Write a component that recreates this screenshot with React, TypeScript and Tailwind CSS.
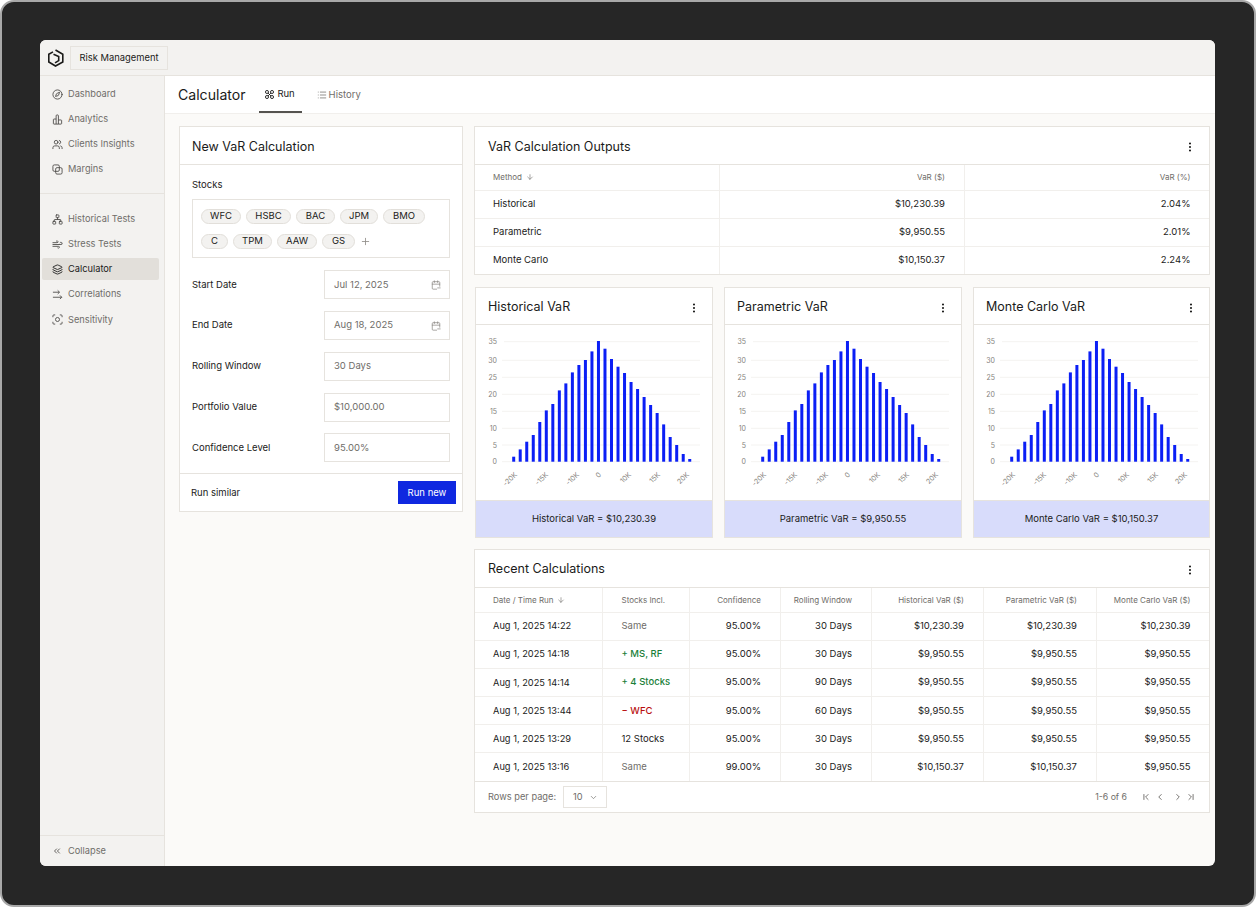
import React from 'react';
import {
  ArrowDown,
  CalendarMinus,
  ChevronDown,
  ChevronFirst,
  ChevronLast,
  ChevronLeft,
  ChevronRight,
  ChevronsLeft,
  Compass,
  EllipsisVertical,
  Layers,
  List,
  Network,
  Plus,
  Users,
  Wind,
} from 'lucide-react';

type IconProps = { size?: number; strokeWidth?: number; className?: string };

// custom icons use a 12 unit box, so the lucide stroke value is halved
const AnalyticsIcon = ({ size = 12, strokeWidth = 2, className }: IconProps) => (
  <svg width={size} height={size} viewBox="0 0 12 12" fill="none" stroke="currentColor" strokeWidth={strokeWidth / 2} className={className}>
    <path d="M4.5 11H2.2a.7.7 0 0 1-.7-.7V6.2a.7.7 0 0 1 .7-.7h2.3" />
    <path d="M4.5 11V2a1 1 0 0 1 1-1h.5a1 1 0 0 1 1 1v9z" />
    <path d="M7 11h2.8a.7.7 0 0 0 .7-.7V7.2a.7.7 0 0 0-.7-.7H7" />
  </svg>
);

const MarginsIcon = ({ size = 12, strokeWidth = 2, className }: IconProps) => (
  <svg width={size} height={size} viewBox="0 0 12 12" fill="none" stroke="currentColor" strokeWidth={strokeWidth / 2} className={className}>
    <rect x="1" y="1" width="7" height="7" rx="1.5" />
    <rect x="4" y="4" width="7" height="7" rx="1.5" />
  </svg>
);

const CorrelationsIcon = ({ size = 12, strokeWidth = 2, className }: IconProps) => (
  <svg width={size} height={size} viewBox="0 0 12 12" fill="none" stroke="currentColor" strokeWidth={strokeWidth / 2} className={className}>
    <path d="M1 3.500h7M6.200 1.500l2 2-2 2" />
    <path d="M1 9h9.500M8.700 7l2 2-2 2" />
  </svg>
);

const SensitivityIcon = ({ size = 12, strokeWidth = 2, className }: IconProps) => (
  <svg width={size} height={size} viewBox="0 0 12 12" fill="none" stroke="currentColor" strokeWidth={strokeWidth / 2} className={className}>
    <path d="M1 3.500V2a1 1 0 0 1 1-1h1.500M8.500 1H10a1 1 0 0 1 1 1v1.500M11 8.500V10a1 1 0 0 1-1 1H8.500M3.500 11H2a1 1 0 0 1-1-1V8.500" />
    <circle cx="6" cy="6" r="2.200" />
  </svg>
);

const NAV_TOP = [
  { label: 'Dashboard', icon: Compass },
  { label: 'Analytics', icon: AnalyticsIcon },
  { label: 'Clients Insights', icon: Users },
  { label: 'Margins', icon: MarginsIcon },
];

const NAV_BOTTOM = [
  { label: 'Historical Tests', icon: Network },
  { label: 'Stress Tests', icon: Wind },
  { label: 'Calculator', icon: Layers, active: true },
  { label: 'Correlations', icon: CorrelationsIcon },
  { label: 'Sensitivity', icon: SensitivityIcon },
];

const STOCKS = [
  { label: 'WFC', w: 'w-[40px]' },
  { label: 'HSBC', w: 'w-[45px]' },
  { label: 'BAC', w: 'w-[39px]' },
  { label: 'JPM', w: 'w-[38px]' },
  { label: 'BMO', w: 'w-[42px]' },
  { label: 'C', w: 'w-[27px]' },
  { label: 'TPM', w: 'w-[39px]' },
  { label: 'AAW', w: 'w-[40px]' },
  { label: 'GS', w: 'w-[33px]' },
];

const BARS = [5, 12.3, 20, 26.7, 39.7, 51.3, 57.7, 71.3, 78.3, 89.3, 96.7, 101.7, 110.3, 120.7, 113, 102.7, 95, 88.7, 79.7, 72.7, 64.7, 56.7, 48.7, 37.3, 24.7, 16.7, 7.7, 2.7];
const Y_TICKS = [
  { label: 35, y: 16.7 },
  { label: 30, y: 35.3 },
  { label: 25, y: 52.3 },
  { label: 20, y: 69.3 },
  { label: 15, y: 86.3 },
  { label: 10, y: 103.3 },
  { label: 5, y: 120 },
  { label: 0, y: 136.7 },
];
const X_TICKS = [
  { label: '-20K', x: 39 },
  { label: '-15K', x: 70 },
  { label: '-10K', x: 101 },
  { label: '0', x: 123 },
  { label: '10K', x: 153 },
  { label: '15K', x: 182 },
  { label: '20K', x: 211 },
];

const RECENT = [
  ['Aug 1, 2025 14:22', 'Same', 'text-[#6f6d69]', '95.00%', '30 Days', '$10,230.39', '$10,230.39', '$10,230.39'],
  ['Aug 1, 2025 14:18', '+ MS, RF', 'font-medium text-[#1c7f3a]', '95.00%', '30 Days', '$9,950.55', '$9,950.55', '$9,950.55'],
  ['Aug 1, 2025 14:14', '+ 4 Stocks', 'font-medium text-[#1c7f3a]', '95.00%', '90 Days', '$9,950.55', '$9,950.55', '$9,950.55'],
  ['Aug 1, 2025 13:44', '− WFC', 'font-medium text-[#b90f0f]', '95.00%', '60 Days', '$9,950.55', '$9,950.55', '$9,950.55'],
  ['Aug 1, 2025 13:29', '12 Stocks', 'text-[#1b1b1a]', '95.00%', '30 Days', '$9,950.55', '$9,950.55', '$9,950.55'],
  ['Aug 1, 2025 13:16', 'Same', 'text-[#6f6d69]', '99.00%', '30 Days', '$10,150.37', '$10,150.37', '$9,950.55'],
];

const Logo = () => (
  <svg width="17" height="18" viewBox="0 0 17 18" fill="none" stroke="#1b1b1a" strokeWidth="1.6">
    <path d="M8.500 1 15.800 5.300V13L8.500 17 1.800 13V5.300L6 2.900" />
    <path d="M6.500 5.300 11.700 7.600V11.600L8 13.900" />
  </svg>
);

const RunIcon = () => (
  <svg width="9" height="9" viewBox="0 0 10 10" fill="none" stroke="#1b1b1a" strokeWidth="1">
    <circle cx="2.200" cy="2.200" r="1.700" />
    <circle cx="7.800" cy="2.200" r="1.700" />
    <circle cx="2.200" cy="7.800" r="1.700" />
    <circle cx="7.800" cy="7.800" r="1.700" />
    <path d="M3.400 3.400 6.600 6.600M6.600 3.400 3.400 6.600" />
  </svg>
);

const NavItem = ({ label, icon: Icon, active }: { label: string; icon: React.ElementType; active?: boolean }) => (
  <div className={`ml-[2px] mr-[5px] flex h-[22px] items-center gap-[5px] rounded-[2px] pl-[10px] text-[9.25px] ${active ? 'bg-[#e2dfda] text-[#1b1b1a]' : 'text-[#6f6d69]'}`}>
    <Icon size={11} strokeWidth={1.9} className={active ? 'text-[#1b1b1a]' : 'text-[#4a4946]'} />
    <span>{label}</span>
  </div>
);

const CardHead = ({ title, menu = true, pad = 'px-[13px] pt-[3px]', height = 'h-[38px]' }: { title: string; menu?: boolean; pad?: string; height?: string }) => (
  <div className={`flex items-center justify-between border-b border-[#e6e3de] ${height} ${pad}`}>
    <h2 className="text-[12.5px] font-normal text-[#1b1b1a]">{title}</h2>
    {menu && <EllipsisVertical size={12} strokeWidth={2.2} className="text-[#1b1b1a]" />}
  </div>
);

const Field = ({ label, value, date }: { label: string; value: string; date?: boolean }) => (
  <div className="flex h-[29px] items-center justify-between">
    <span className="text-[9.5px] text-[#1b1b1a]">{label}</span>
    <div className="flex h-[29px] w-[126px] items-center justify-between border border-[#e6e3de] bg-white pl-[9px] pr-[8px] text-[9.5px] text-[#6f6d69]">
      <span>{value}</span>
      {date && <CalendarMinus size={10} strokeWidth={1.7} className="text-[#85827d]" />}
    </div>
  </div>
);

const Chip = ({ label, w }: { label: string; w: string }) => (
  <span className={`flex h-[15px] items-center justify-center rounded-full border border-[#e2dfda] bg-[#f3f2f0] text-[9.5px] text-[#1b1b1a] ${w}`}>{label}</span>
);

const VarChart = () => (
  <svg width="236" height="175" viewBox="0 0 236 175" className="block">
    {Y_TICKS.map((tick) => (
      <g key={tick.label}>
        <line x1={tick.label === 35 ? 28 : 26} x2={tick.label === 25 ? 237 : 224} y1={tick.y} y2={tick.y} stroke="#f4f3f1" strokeWidth="1" />
        <text x="21" y={tick.y + 2.5} textAnchor="end" fontSize="7" fill="#85827d">{tick.label}</text>
      </g>
    ))}
    {BARS.map((h, i) => (
      <rect key={i} x={36.2 + i * 6.52} y={136.7 - h} width="3" height={h} fill="#0b1ff5" />
    ))}
    {X_TICKS.map((tick) => (
      <text key={tick.label} x={tick.x - 1} y="155" textAnchor="end" fontSize="7" fill="#85827d" transform={`rotate(-45 ${tick.x - 1} 155)`} dx="6" dy="-1">
        {tick.label}
      </text>
    ))}
  </svg>
);

const ChartCard = ({ title, result, width }: { title: string; result: string; width: string }) => (
  <div className={`shrink-0 overflow-hidden border border-[#e6e3de] bg-white ${width}`}>
    <CardHead title={title} pad="px-[12px] pt-[3px]" height="h-[37px]" />
    <div className="h-[175px]"><VarChart /></div>
    <div className="flex h-[37px] items-center justify-center border-t border-[#e6e3de] bg-[#d8dcfb] text-[9.5px] text-[#1b1b1a]">{result}</div>
  </div>
);

export default function App() {
  return (
    <div className="h-[907px] w-[1256px] bg-white font-['Inter',sans-serif] antialiased">
      <div className="h-full w-full rounded-[14px] border-2 border-[#a8a8a8] bg-[#262626] p-[38px]">
        <div className="flex h-[826px] w-[1175px] flex-col overflow-hidden rounded-[6px] bg-[#fbfaf8]">
          <div className="flex h-[36px] shrink-0 items-center gap-[6px] border-b border-[#e6e3de] bg-[#f3f2f0] pl-[7px] pt-[1px]">
            <Logo />
            <div className="flex h-[24px] items-center border border-[#e6e3de] px-[8.5px] text-[9.4px] text-[#1b1b1a]">Risk Management</div>
          </div>

          <div className="flex min-h-0 flex-1">
            <aside className="flex w-[125px] shrink-0 flex-col border-r border-[#e6e3de] bg-[#f3f2f0]">
              <div className="flex flex-col gap-[3px] pt-[7px] pb-[13px]">
                {NAV_TOP.map((item) => <NavItem key={item.label} {...item} />)}
              </div>
              <div className="flex flex-1 flex-col gap-[3.15px] border-t border-[#e6e3de] pt-[14px]">
                {NAV_BOTTOM.map((item) => <NavItem key={item.label} {...item} />)}
              </div>
              <div className="flex h-[31px] items-center gap-[6px] border-t border-[#e6e3de] pl-[12px] text-[9.25px] text-[#6f6d69]">
                <ChevronsLeft size={10} strokeWidth={2} className="text-[#4a4946]" />
                <span>Collapse</span>
              </div>
            </aside>

            <main className="min-w-0 flex-1">
              <div className="flex h-[38px] items-center border-b border-[#f1efec] bg-white pl-[13px]">
                <h1 className="text-[14.1px] font-normal text-[#1b1b1a]">Calculator</h1>
                <div className="ml-[13px] flex h-full">
                  <div className="flex h-full w-[43px] items-center justify-center gap-[3px] border-b-2 border-[#55534f] pt-[1px] text-[9.5px] text-[#1b1b1a]">
                    <RunIcon />
                    <span>Run</span>
                  </div>
                  <div className="ml-[15px] flex h-full items-center gap-[3px] pt-[1px] text-[9.5px] text-[#6f6d69]">
                    <List size={10} strokeWidth={1.8} />
                    <span className="-ml-[1px]">History</span>
                  </div>
                </div>
              </div>

              <div className="flex items-start gap-[11px] pl-[14px] pt-[12px]">
                <section className="w-[284px] shrink-0 border border-[#e6e3de] bg-white">
                  <CardHead title="New VaR Calculation" menu={false} pad="px-[12px] pt-[3px]" />
                  <div className="px-[12px] pb-[11px]">
                    <div className="pt-[13px] text-[9.5px] text-[#1b1b1a]">Stocks</div>
                    <div className="mt-[7px] flex h-[59px] flex-wrap content-center gap-x-[5px] gap-y-[10px] border border-[#e6e3de] px-[8px]">
                      {STOCKS.map((s) => <Chip key={s.label} {...s} />)}
                      <Plus size={11} strokeWidth={1.8} className="mt-[2px] text-[#8f8c87]" />
                    </div>
                    <div className="mt-[12px] flex flex-col gap-[11.75px]">
                      <Field label="Start Date" value="Jul 12, 2025" date />
                      <Field label="End Date" value="Aug 18, 2025" date />
                      <Field label="Rolling Window" value="30 Days" />
                      <Field label="Portfolio Value" value="$10,000.00" />
                      <Field label="Confidence Level" value="95.00%" />
                    </div>
                  </div>
                  <div className="flex h-[38px] items-center justify-between border-t border-[#e6e3de] pl-[11px] pr-[6px]">
                    <span className="text-[9.5px] text-[#1b1b1a]">Run similar</span>
                    <button className="flex h-[23px] w-[58px] items-center justify-center bg-[#0f28e0] text-[9.5px] text-white">Run new</button>
                  </div>
                </section>

                <div className="flex w-[736px] shrink-0 flex-col gap-[11px]">
                  <section className="mb-[1px] border border-[#e6e3de] bg-white">
                    <CardHead title="VaR Calculation Outputs" />
                    <table className="w-full table-fixed border-collapse text-[9.5px] text-[#1b1b1a]">
                      <thead>
                        <tr className="h-[25px] border-b border-[#f1efec] text-[8px] font-normal text-[#6f6d69]">
                          <th className="w-[244px] pl-[18px] text-left font-normal">
                            <span className="flex items-center gap-[4px]">Method <ArrowDown size={8} strokeWidth={1.8} /></span>
                          </th>
                          <th className="border-l border-[#f1efec] pr-[18.5px] text-right font-normal">VaR ($)</th>
                          <th className="border-l border-[#f1efec] pr-[18.5px] text-right font-normal">VaR (%)</th>
                        </tr>
                      </thead>
                      <tbody>
                        {[
                          ['Historical', '$10,230.39', '2.04%'],
                          ['Parametric', '$9,950.55', '2.01%'],
                          ['Monte Carlo', '$10,150.37', '2.24%'],
                        ].map((row) => (
                          <tr key={row[0]} className="h-[28px] border-b border-[#f1efec] last:border-b-0">
                            <td className="pl-[18px]">{row[0]}</td>
                            <td className="border-l border-[#f1efec] pr-[18.5px] text-right">{row[1]}</td>
                            <td className="border-l border-[#f1efec] pr-[18.5px] text-right">{row[2]}</td>
                          </tr>
                        ))}
                      </tbody>
                    </table>
                  </section>

                  <div className="flex gap-[11px] pl-[1px]">
                    <ChartCard width="w-[238px]" title="Historical VaR" result="Historical VaR = $10,230.39" />
                    <ChartCard width="w-[238px]" title="Parametric VaR" result="Parametric VaR = $9,950.55" />
                    <ChartCard width="w-[237px]" title="Monte Carlo VaR" result="Monte Carlo VaR = $10,150.37" />
                  </div>

                  <section className="border border-[#e6e3de] bg-white">
                    <CardHead title="Recent Calculations" pad="px-[13px] pt-[2px]" />
                    <table className="w-full table-fixed border-collapse text-[9.5px] text-[#1b1b1a]">
                      <thead>
                        <tr className="h-[24px] border-b border-[#f1efec] text-[8px] text-[#6f6d69]">
                          <th className="w-[127px] pl-[18px] text-left font-normal">
                            <span className="flex items-center gap-[4px]">Date / Time Run <ArrowDown size={8} strokeWidth={1.8} /></span>
                          </th>
                          <th className="w-[87px] border-l border-[#f1efec] pl-[19px] text-left font-normal">Stocks Incl.</th>
                          <th className="w-[91px] border-l border-[#f1efec] pr-[18.5px] text-right font-normal">Confidence</th>
                          <th className="w-[91px] border-l border-[#f1efec] pr-[18.5px] text-right font-normal">Rolling Window</th>
                          <th className="w-[112px] border-l border-[#f1efec] pr-[18.5px] text-right font-normal">Historical VaR ($)</th>
                          <th className="w-[113px] border-l border-[#f1efec] pr-[18.5px] text-right font-normal">Parametric VaR ($)</th>
                          <th className="border-l border-[#f1efec] pr-[18.5px] text-right font-normal">Monte Carlo VaR ($)</th>
                        </tr>
                      </thead>
                      <tbody>
                        {RECENT.map((row) => (
                          <tr key={row[0]} className="h-[28.2px] border-b border-[#f1efec] last:border-b-0">
                            <td className="pl-[18px] text-[9.25px]">{row[0]}</td>
                            <td className={`border-l border-[#f1efec] pl-[19px] ${row[2]}`}>{row[1]}</td>
                            <td className="border-l border-[#f1efec] pr-[18.5px] text-right">{row[3]}</td>
                            <td className="border-l border-[#f1efec] pr-[18.5px] text-right">{row[4]}</td>
                            <td className="border-l border-[#f1efec] pr-[18.5px] text-right">{row[5]}</td>
                            <td className="border-l border-[#f1efec] pr-[18.5px] text-right">{row[6]}</td>
                            <td className="border-l border-[#f1efec] pr-[18.5px] text-right">{row[7]}</td>
                          </tr>
                        ))}
                      </tbody>
                    </table>
                    <div className="flex h-[31px] items-center justify-between border-t border-[#e6e3de] pl-[13px] pr-[13px] text-[9.25px] text-[#6f6d69]">
                      <div className="flex items-center gap-[7px]">
                        <span>Rows per page:</span>
                        <div className="flex h-[22px] w-[44px] items-center justify-between border border-[#e6e3de] pl-[9px] pr-[8px]">
                          <span>10</span>
                          <ChevronDown size={9} strokeWidth={1.8} />
                        </div>
                      </div>
                      <div className="flex items-center text-[#55534f]">
                        <span className="mr-[14px] text-[8.75px] text-[#6f6d69]">1-6 of 6</span>
                        <ChevronFirst size={10} strokeWidth={1.9} />
                        <ChevronLeft size={10} strokeWidth={1.9} className="ml-[4px]" />
                        <ChevronRight size={10} strokeWidth={1.9} className="ml-[8px]" />
                        <ChevronLast size={10} strokeWidth={1.9} className="ml-[3px]" />
                      </div>
                    </div>
                  </section>
                </div>
              </div>
            </main>
          </div>
        </div>
      </div>
    </div>
  );
}
